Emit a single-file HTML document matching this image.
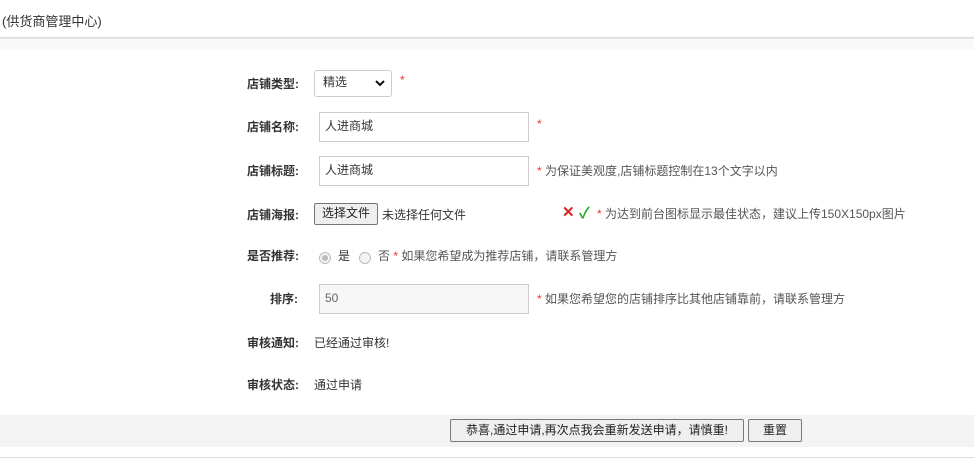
<!DOCTYPE html>
<html><head><meta charset="utf-8"><style>
body{margin:0;width:974px;height:460px;background:#fff;font-family:"Liberation Sans","Noto Sans CJK SC",sans-serif;font-size:12px;color:#333;position:relative;overflow:hidden}
.a{position:absolute;white-space:nowrap}
.l{font-weight:bold;color:#333}
.inp{position:absolute;border:1px solid #ccc;box-sizing:border-box;background:#fff;padding-left:5px;line-height:26px;font-size:12px}
.s{color:#e33}
.g{color:#555}
.btn{position:absolute;border:1px solid #777;border-radius:2px;background:#efefef;box-sizing:border-box;text-align:center;font-size:12px;color:#222}
.radio{position:absolute;width:12px;height:12px;border:1px solid #bbb;border-radius:50%;box-sizing:border-box;background:#f4f4f4}
</style></head><body>
<div class="a" style="left:2px;top:11px;font-size:13px;color:#333">(供货商管理中心)</div>
<div class="a" style="left:0;top:37px;width:974px;height:1px;background:#ddd"></div>
<div class="a" style="left:0;top:38px;width:974px;height:11px;background:#f9f9f9;border-top:1px solid #e6e6e6"></div>

<div class="a l" style="left:247px;top:75px">店铺类型:</div>
<div class="inp" style="left:314px;top:70px;width:78px;height:27px;border-radius:3px;line-height:23px;padding-left:8px">精选<svg style="position:absolute;right:6px;top:9px" width="10" height="7" viewBox="0 0 10 7"><path d="M1 1L5 5L9 1" stroke="#111" stroke-width="2" fill="none"/></svg></div>
<div class="a s" style="left:400px;top:73px">*</div>

<div class="a l" style="left:247px;top:118px">店铺名称:</div>
<div class="inp" style="left:319px;top:112px;width:210px;height:30px">人进商城</div>
<div class="a s" style="left:537px;top:117px">*</div>

<div class="a l" style="left:247px;top:162px">店铺标题:</div>
<div class="inp" style="left:319px;top:156px;width:210px;height:30px">人进商城</div>
<div class="a g" style="left:537px;top:162px"><span class="s">*</span> 为保证美观度,店铺标题控制在13个文字以内</div>

<div class="a l" style="left:247px;top:206px">店铺海报:</div>
<div class="btn" style="left:314px;top:203px;width:64px;height:22px;line-height:19px">选择文件</div>
<div class="a" style="left:382px;top:206px">未选择任何文件</div>
<div class="a" style="left:562px;top:203px;color:#d22;font-size:15px;font-weight:bold">✕</div>
<div class="a" style="left:579px;top:202px;color:#2a2;font-size:15px;font-weight:bold">✓</div>
<div class="a g" style="left:597px;top:205px"><span class="s">*</span> 为达到前台图标显示最佳状态，建议上传150X150px图片</div>

<div class="a l" style="left:247px;top:247px">是否推荐:</div>
<div class="radio" style="left:319px;top:252px"><div style="width:6px;height:6px;border-radius:50%;background:#bbb;margin:2px"></div></div>
<div class="a" style="left:338px;top:247px">是</div>
<div class="radio" style="left:359px;top:252px"></div>
<div class="a g" style="left:378px;top:247px">否 <span class="s">*</span> 如果您希望成为推荐店铺，请联系管理方</div>

<div class="a l" style="left:270px;top:290px">排序:</div>
<div class="inp" style="left:319px;top:284px;width:210px;height:30px;background:#f7f7f7;color:#666">50</div>
<div class="a g" style="left:537px;top:290px"><span class="s">*</span> 如果您希望您的店铺排序比其他店铺靠前，请联系管理方</div>

<div class="a l" style="left:247px;top:334px">审核通知:</div>
<div class="a" style="left:314px;top:334px">已经通过审核!</div>
<div class="a l" style="left:247px;top:376px">审核状态:</div>
<div class="a" style="left:314px;top:376px">通过申请</div>

<div class="a" style="left:0;top:415px;width:974px;height:32px;background:#f3f3f3"></div>
<div class="btn" style="left:450px;top:419px;width:294px;height:23px;line-height:20px">恭喜,通过申请,再次点我会重新发送申请，请慎重!</div>
<div class="btn" style="left:748px;top:419px;width:54px;height:23px;line-height:20px">重置</div>
<div class="a" style="left:0;top:457px;width:974px;height:1px;background:#ddd"></div>
</body></html>
